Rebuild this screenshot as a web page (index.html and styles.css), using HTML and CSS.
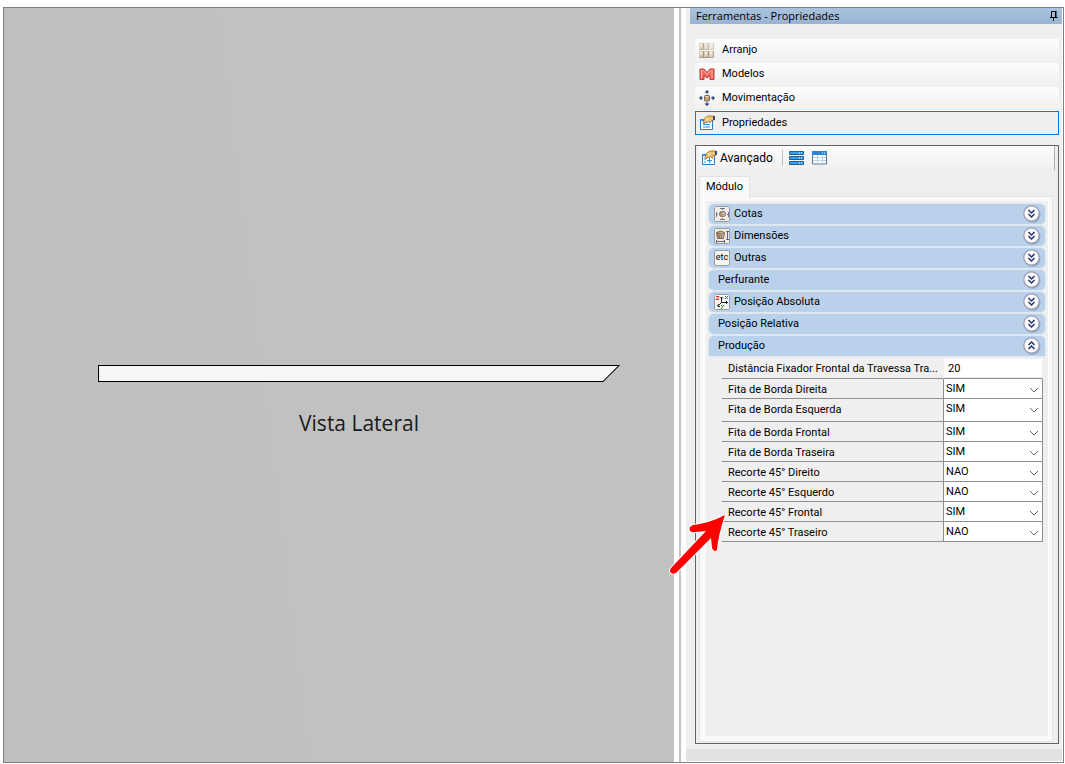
FILE: index.html
```html
<!DOCTYPE html>
<html lang="pt-BR">
<head>
    <meta charset="UTF-8">
    <meta name="viewport" content="width=device-width, initial-scale=1.0">
    <title>Ferramentas - Propriedades</title>
    <link rel="stylesheet" href="styles.css">
</head>
<body>
    <!-- shared icon shapes -->
    <svg class="defs" aria-hidden="true">
        <defs>
            <linearGradient id="wood" x1="0" y1="0" x2="1" y2="0">
                <stop offset="0" stop-color="#9c7f5e"/>
                <stop offset="1" stop-color="#d9cbbb"/>
            </linearGradient>
            <symbol id="box" viewBox="0 0 5 7">
                <rect x="0" y="0" width="5" height="7" rx="1" fill="#a39078"/>
                <rect x="0" y="0" width="4" height="6" rx="1" fill="#d9ccba"/>
                <rect x="1" y="1" width="2" height="2" fill="#f4ede2"/>
            </symbol>
            <symbol id="hand" viewBox="0 0 16 16">
                <path d="M1.500 4.500h12v10h-12z" fill="#fff" stroke="#2b7bc4"/>
                <path d="M1 4h13v2h-13z" fill="#2f8ee0"/>
                <path d="M4 7l2-4 3-2h6v4l-3 1-1 2-2-2-1 2-2-1-1 2z" fill="#efc36b" stroke="#9a6a20" stroke-width="0.8"/>
                <path d="M14 1h2v4h-2z" fill="#3b4a66"/>
                <path d="M6 4l3-1M7 5.500l3-1" stroke="#fff0bd" stroke-width="0.8"/>
            </symbol>
            <symbol id="down" viewBox="0 0 18 18">
                <circle cx="9.500" cy="9.800" r="8" fill="#7d8ea8" opacity="0.6"/>
                <circle cx="8.500" cy="8.500" r="7.700" fill="#fbfbfd" stroke="#9ba0b5" stroke-width="1.300"/>
                <path d="M5.500 5l3 3 3-3M5.500 9l3 3 3-3" fill="none" stroke="#26346e" stroke-width="1.500"/>
            </symbol>
            <symbol id="up" viewBox="0 0 18 18">
                <circle cx="9.500" cy="9.800" r="8" fill="#7d8ea8" opacity="0.6"/>
                <circle cx="8.500" cy="8.500" r="7.700" fill="#fbfbfd" stroke="#9ba0b5" stroke-width="1.300"/>
                <path d="M5.500 8l3-3 3 3M5.500 12l3-3 3 3" fill="none" stroke="#26346e" stroke-width="1.500"/>
            </symbol>
        </defs>
    </svg>

    <div class="window">
        <main class="canvas">
            <figure class="drawing">
                <svg class="beam" viewBox="0 0 521 17" role="img" aria-label="Travessa">
                    <path d="M0.500 0.500H520L504 16.500H0.500Z" fill="#f6f6f6" stroke="#000"/>
                </svg>
                <figcaption>Vista Lateral</figcaption>
            </figure>
        </main>
        <div class="splitter"></div>

        <aside class="sidebar">
            <header class="titlebar">
                <h1>Ferramentas - Propriedades</h1>
                <button class="pin" type="button" aria-label="Fixar painel">
                    <svg viewBox="0 0 8 10" width="8" height="10">
                        <path d="M1.500 6V0.500H5.500V6M0 6.500h7.500M3.500 7v3" fill="none" stroke="#000"/>
                        <path d="M5 0h1.500v6H5z"/>
                    </svg>
                </button>
            </header>

            <nav class="tools">
                <button type="button">
                    <svg viewBox="0 0 16 16">
                        <use href="#box" x="0" y="1" width="5" height="7" opacity="0.8"/>
                        <use href="#box" x="5" y="1" width="5" height="7" opacity="0.6"/>
                        <use href="#box" x="10" y="1" width="5" height="7" opacity="0.4"/>
                        <use href="#box" x="0" y="9" width="5" height="7"/>
                        <use href="#box" x="5" y="9" width="5" height="7"/>
                        <use href="#box" x="10" y="9" width="5" height="7" opacity="0.8"/>
                    </svg>
                    Arranjo
                </button>
                <button type="button">
                    <svg viewBox="0 0 16 16">
                        <path d="M1 3h4l3 3.500 3-3.500h4v10.500h-4V9.500l-3 2.500-3-2.500v4H1z" fill="#ee6a5c" stroke="#c43a36" stroke-linejoin="round"/>
                        <path d="M2.500 4v8.500M4 4l4 4.500L12 4M13 4v8.500" fill="none" stroke="#fbb8aa"/>
                    </svg>
                    Modelos
                </button>
                <button type="button">
                    <svg viewBox="0 0 16 16">
                        <path d="M8 0l2.500 2.500h-5zM8 16l2.500-2.500h-5zM0 8l2.500-2.500v5zM16 8l-2.500-2.500v5z" fill="#1d4374"/>
                        <path d="M8 1v3M8 12v3M1 8h3M12 8h3" stroke="#1d4374"/>
                        <rect x="5.500" y="5.500" width="5" height="5.500" rx="1" fill="#c9a77c" stroke="#75634e"/>
                        <path d="M6.500 6.500h3" stroke="#f1dcc0"/>
                    </svg>
                    Movimentação
                </button>
                <button type="button" class="selected">
                    <svg viewBox="0 0 16 16">
                        <use href="#hand" width="16" height="16"/>
                        <path d="M4 9.500h7M4 12h7" stroke="#2f8ee0"/>
                    </svg>
                    Propriedades
                </button>
            </nav>

            <section class="panel">
                <div class="toolbar">
                    <button type="button">
                        <svg viewBox="0 0 16 16" width="16" height="16">
                            <use href="#hand" width="16" height="16"/>
                            <path d="M3 9h2M3 12h2M6 10.500h5M8.500 8v5M12 8v1" stroke="#2f8ee0"/>
                        </svg>
                        Avançado
                    </button>
                    <span class="separator"></span>
                    <button type="button" aria-label="Categorias">
                        <svg viewBox="0 0 15 14" width="15" height="14">
                            <path d="M0.500 0.500h14v3h-14zM0.500 5.500h14v3h-14zM0.500 10.500h14v3h-14z" fill="#389df0" stroke="#24608e"/>
                            <path d="M10 2h1M12 2h1M10 7h1M12 7h1M10 12h1M12 12h1" stroke="#fff"/>
                        </svg>
                    </button>
                    <button type="button" aria-label="Tabela">
                        <svg viewBox="0 0 15 14" width="15" height="14">
                            <path d="M0.500 0.500h14v12.500h-14z" fill="#fff" stroke="#50738f"/>
                            <path d="M0 0h15v4H0z" fill="#2687da"/>
                            <path d="M10 2h1M12 2h1" stroke="#fff"/>
                            <path d="M5.500 4v9M10.500 4v9M1 6.500h13M1 9.500h13" stroke="#c1d3e2"/>
                        </svg>
                    </button>
                </div>

                <div class="tabs">
                    <button type="button" class="tab">Módulo</button>
                </div>

                <div class="page">
                    <div class="groups">
                        <button type="button" class="group">
                            <svg class="badge" viewBox="0 0 16 16">
                                <rect x="0.500" y="0.500" width="15" height="15" rx="1" fill="#efedea" stroke="#9c9c9c"/>
                                <path d="M6 2.500h5M8.500 2v2M6 13.500h5M8.500 12v2M2.500 6v5M2 8.500h2M14.500 6v5M13 8.500h2" stroke="#707780"/>
                                <rect x="5.500" y="5.500" width="6" height="5" rx="2" fill="url(#wood)" stroke="#8f7355"/>
                            </svg>
                            <span>Cotas</span>
                            <svg class="toggle"><use href="#down"/></svg>
                        </button>
                        <button type="button" class="group">
                            <svg class="badge" viewBox="0 0 16 16">
                                <rect x="0.500" y="0.500" width="15" height="15" rx="1" fill="#efedea" stroke="#9c9c9c"/>
                                <path d="M2.500 4.500q4-3 8 0l-1 6h-6z" fill="url(#wood)" stroke="#80684d"/>
                                <path d="M3 5.500q3.500 2 7 0M5.500 7v3M7.500 7v3" fill="none" stroke="#80684d" stroke-width="0.8"/>
                                <path d="M12 3.500h3M13.500 3v8M12 11.500h3M2 13.500h9M2.500 12v3M10.500 12v3" stroke="#606873"/>
                            </svg>
                            <span>Dimensões</span>
                            <svg class="toggle"><use href="#down"/></svg>
                        </button>
                        <button type="button" class="group">
                            <span class="badge etc">etc</span>
                            <span>Outras</span>
                            <svg class="toggle"><use href="#down"/></svg>
                        </button>
                        <button type="button" class="group">
                            <span>Perfurante</span>
                            <svg class="toggle"><use href="#down"/></svg>
                        </button>
                        <button type="button" class="group">
                            <svg class="badge" viewBox="0 0 16 16">
                                <rect x="0.500" y="0.500" width="15" height="15" rx="1" fill="#f5f5f2" stroke="#9c9c9c"/>
                                <path d="M7.500 3v6M6 4.500l1.500-1.500L9 4.500M7.500 8.500h6M12 7l1.500 1.500L12 10M7.500 8.500L4 12M4 10v2.500h2" fill="none" stroke="#222"/>
                                <path d="M2 2.500h3L2 5.500h3" fill="none" stroke="#cf3030"/>
                                <path d="M11 2l3 3M14 2l-3 3" stroke="#3576b8"/>
                                <path d="M7 11l1.500 1.500M10 11l-3 4" stroke="#348737"/>
                            </svg>
                            <span>Posição Absoluta</span>
                            <svg class="toggle"><use href="#down"/></svg>
                        </button>
                        <button type="button" class="group">
                            <span>Posição Relativa</span>
                            <svg class="toggle"><use href="#down"/></svg>
                        </button>
                        <button type="button" class="group open" aria-expanded="true">
                            <span>Produção</span>
                            <svg class="toggle"><use href="#up"/></svg>
                        </button>

                        <table class="props">
                            <tr class="number">
                                <th><label for="distancia">Distância Fixador Frontal da Travessa Tra...</label></th>
                                <td><input type="text" id="distancia" value="20"></td>
                            </tr>
                            <tr>
                                <th><label for="fitaDireita">Fita de Borda Direita</label></th>
                                <td><select id="fitaDireita"><option selected>SIM</option><option>NAO</option></select></td>
                            </tr>
                            <tr class="tall">
                                <th><label for="fitaEsquerda">Fita de Borda Esquerda</label></th>
                                <td><select id="fitaEsquerda"><option selected>SIM</option><option>NAO</option></select></td>
                            </tr>
                            <tr>
                                <th><label for="fitaFrontal">Fita de Borda Frontal</label></th>
                                <td><select id="fitaFrontal"><option selected>SIM</option><option>NAO</option></select></td>
                            </tr>
                            <tr>
                                <th><label for="fitaTraseira">Fita de Borda Traseira</label></th>
                                <td><select id="fitaTraseira"><option selected>SIM</option><option>NAO</option></select></td>
                            </tr>
                            <tr>
                                <th><label for="recorteDireito">Recorte 45° Direito</label></th>
                                <td><select id="recorteDireito"><option>SIM</option><option selected>NAO</option></select></td>
                            </tr>
                            <tr>
                                <th><label for="recorteEsquerdo">Recorte 45° Esquerdo</label></th>
                                <td><select id="recorteEsquerdo"><option>SIM</option><option selected>NAO</option></select></td>
                            </tr>
                            <tr>
                                <th class="pointed">
                                    <label for="recorteFrontal">Recorte 45° Frontal</label>
                                    <svg class="arrow" viewBox="0 0 60 64" aria-hidden="true">
                                        <path d="M57 2Q42 10 25 12Q20 14 22 18Q24 20 28 19L38 18L3 55Q1 58 3 60Q6 62 9 59L43 25L44 35Q46 40 49 37Q50 23 57 2Z" fill="#ff0000" stroke="#fff" stroke-width="2" stroke-linejoin="round" paint-order="stroke"/>
                                    </svg>
                                </th>
                                <td><select id="recorteFrontal"><option selected>SIM</option><option>NAO</option></select></td>
                            </tr>
                            <tr>
                                <th><label for="recorteTraseiro">Recorte 45° Traseiro</label></th>
                                <td><select id="recorteTraseiro"><option>SIM</option><option selected>NAO</option></select></td>
                            </tr>
                        </table>
                    </div>
                </div>
            </section>
            <footer class="statusbar"></footer>
        </aside>
    </div>
</body>
</html>
```

FILE: styles.css
```css
* {
    box-sizing: border-box;
}
body {
    font-family: Roboto, "Liberation Sans", sans-serif;
    font-size: 11px;
    line-height: 16px;
    color: #000;
    display: flex;
    min-height: 100vh;
    margin: 0;
    padding: 7px 1px 1px 3px;
    background-color: white;
}
button {
    font: inherit;
    color: inherit;
    border: none;
    background: none;
    padding: 0;
    text-align: left;
}
.defs {
    position: absolute;
    width: 0;
    height: 0;
}
.window {
    flex: 1;
    display: flex;
    border: 1px solid #7f7f7f;
    padding-right: 1px;
}

/* drawing area */
.canvas {
    flex: 1;
    display: flex;
    flex-direction: column;
    justify-content: center;
    padding: 34px 54px 0 94px;
    background: linear-gradient(83deg, #c0c0c0 40%, #c1c1c1 40%, #c1c1c1 92%, #c2c2c2 92%);
}
.drawing {
    margin: 0;
    text-align: center;
}
.beam {
    display: block;
    width: 100%;
}
figcaption {
    margin-top: 24px;
    font-family: "Open Sans", "Noto Sans", sans-serif;
    font-size: 21px;
    line-height: 32px;
    color: #1a1a1a;
}
.splitter {
    width: 12px;
    border: solid white;
    border-width: 0 5px;
    background-color: #c4c4c4;
}

/* tools sidebar */
.sidebar {
    width: 376px;
    display: flex;
    flex-direction: column;
    background-color: #efefef;
    border-bottom: 1px solid white;
}
.titlebar {
    display: flex;
    justify-content: space-between;
    align-items: center;
    height: 16px;
    margin-left: 4px;
    padding: 0 4px 0 6px;
    background: linear-gradient(#a9c3de, #9ab3d2);
}
h1 {
    margin: 0;
    font-family: "Open Sans", "Noto Sans", sans-serif;
    font-size: 11px;
    font-weight: normal;
}
.pin svg {
    display: block;
}
.tools {
    display: flex;
    flex-direction: column;
    margin: 15px 3px 10px 9px;
}
.tools button {
    display: flex;
    align-items: center;
    gap: 7px;
    height: 24px;
    padding: 0 4px;
    border-bottom: 2px solid transparent;
    background: linear-gradient(#fdfdfd, #efefef) border-box;
}
.tools svg {
    width: 16px;
    height: 16px;
}
.tools .selected {
    padding: 0 3px 1px;
    border: 1px solid #0078d7;
    background: #efefef;
}
.panel {
    flex: 1;
    display: flex;
    flex-direction: column;
    margin: 0 3px 5px 9px;
    border: 1px solid #636363;
    padding: 0 5px 1px 3px;
}
.toolbar {
    display: flex;
    align-items: center;
    gap: 8px;
    height: 24px;
    margin-right: -2px;
    padding-left: 2px;
    border-right: 1px solid #b0b0b0;
    background: linear-gradient(#fdfdfd, #efefef);
    font-size: 12px;
}
.toolbar button {
    display: flex;
    align-items: center;
    gap: 3px;
}
.separator {
    width: 1px;
    height: 16px;
    margin: 0 -2px 0 1px;
    background-color: #bdbdbd;
}
.tabs {
    margin-top: 6px;
    display: flex;
}
.tab {
    width: 51px;
    height: 21px;
    margin-bottom: -1px;
    border: 1px solid #e3e3e3;
    border-bottom: none;
    background-color: #f9f9f9;
    text-align: center;
    position: relative;
}
.page {
    flex: 1;
    display: flex;
    border: 1px solid #e3e3e3;
    padding: 4px 4px 5px 6px;
    background-color: #f9f9f9;
}
.groups {
    flex: 1;
    padding: 3px;
    background-color: #efefef;
}
.group {
    display: flex;
    align-items: center;
    gap: 4px;
    width: 100%;
    height: 20px;
    margin-bottom: 2px;
    padding: 0 4px 0 5px;
    border-radius: 5px;
    background-color: #b9d1ea;
    box-shadow: 0 0 0 1px #dde8f2;
}
.group > span:first-child:not(.badge) {
    padding-left: 4px;
}
.group.open {
    margin-bottom: 1px;
    border-radius: 5px 5px 0 0;
}
.badge {
    width: 16px;
    height: 16px;
}
.etc {
    border: 1px solid #9c9c9c;
    border-radius: 2px;
    background-color: #f4f4f2;
    font-size: 9px;
    line-height: 13px;
    text-align: center;
}
.toggle {
    width: 18px;
    height: 18px;
    margin-left: auto;
}

/* property grid */
.props {
    width: calc(100% - 15px);
    margin-left: 13px;
    table-layout: fixed;
    border-spacing: 0;
    font-size: 11px;
}
.props th,
.props td {
    height: 20px;
    padding: 0;
    border-bottom: 1px solid #8f8f8f;
    line-height: 16px;
}
.props th {
    padding: 2px 0 0 6px;
    font-weight: normal;
    text-align: left;
    white-space: nowrap;
}
.props td {
    width: 100px;
    border-left: 1px solid #8f8f8f;
    border-right: 1px solid #8f8f8f;
    background-color: white;
    vertical-align: top;
}
.props .number th,
.props .number td {
    height: 22px;
}
.props .number td {
    padding: 2px 0 1px;
    border-left-color: transparent;
    border-right-color: transparent;
    background-color: #efefef;
}
.props .tall th,
.props .tall td {
    height: 23px;
}
.props .tall th {
    padding-top: 0;
}
.props input,
.props select {
    display: block;
    width: 100%;
    height: 18px;
    margin: 0;
    border: none;
    border-radius: 0;
    background-color: white;
    font: inherit;
    color: inherit;
}
.props input {
    padding: 1px 4px 0;
}
.props select {
    appearance: none;
    padding: 1px 20px 0 2px;
    background: white url("data:image/svg+xml,%3Csvg xmlns='http://www.w3.org/2000/svg' width='10' height='6'%3E%3Cpath d='M1 1l4 4 4-4' fill='none' stroke='%23666'/%3E%3C/svg%3E") no-repeat right 3px bottom 4px;
}
.pointed {
    position: relative;
}
.arrow {
    position: absolute;
    top: 11px;
    left: -54px;
    width: 60px;
    height: 64px;
}
.statusbar {
    height: 12px;
    background-color: #e2e2e2;
}
```
